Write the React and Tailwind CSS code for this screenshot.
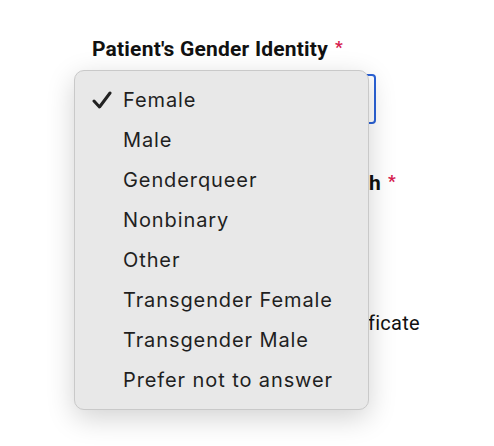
export default function App() {
  const items = [
    "Female",
    "Male",
    "Genderqueer",
    "Nonbinary",
    "Other",
    "Transgender Female",
    "Transgender Male",
    "Prefer not to answer",
  ];
  return (
    <div className="relative w-[494px] h-[446px] bg-white overflow-hidden">
      <div className="pl-[92px] pt-[36px]">
        <div className="flex items-start font-['Roboto',sans-serif] font-bold text-[21px] leading-[26px] text-[#111] tracking-[0.2px]">
          <span>Patient's Gender Identity</span>
          <span className="text-[#d6204e] text-[17px] ml-[7px] leading-[20px] mt-[1px]">*</span>
        </div>
        <div className="mt-[12px] w-[286px] h-[50px] rounded-[4px] border-2 border-[#2b62d6] ml-[-2px]"></div>
        <div className="mt-[46px] w-[304px] flex justify-end items-start font-['Roboto',sans-serif] font-bold text-[21px] leading-[26px] text-[#111] tracking-[0.2px]">
          <span>Patient's Date of Birth</span>
          <span className="text-[#d6204e] text-[17px] ml-[7px] leading-[20px] mt-[1px]">*</span>
        </div>
        <div className="mt-[114px] w-[328px] flex justify-end font-['Roboto',sans-serif] text-[20px] leading-[26px] text-[#111] tracking-[0.3px]">
          Sex on Original Birth Certificate
        </div>
      </div>
      <div className="absolute left-[74px] top-[70px] w-[295px] h-[340px] rounded-[10px] bg-[#e8e8e8] border border-[#c9c9c9] shadow-[0_8px_28px_rgba(0,0,0,0.18)] pt-[9px] pb-[9px]">
        {items.map((t, i) => (
          <div key={t} className="relative h-[40px] flex items-center pl-[48px] font-['Inter',sans-serif] text-[20px] tracking-[0.9px] text-[#1f1f1f]">
            {i === 0 && (
              <svg className="absolute left-[17px] top-[11px]" width="20" height="18" viewBox="0 0 20 18">
                <path d="M2 10 L7.5 16 L18 2" fill="none" stroke="#222" strokeWidth="3" strokeLinecap="round" strokeLinejoin="round" />
              </svg>
            )}
            {t}
          </div>
        ))}
      </div>
    </div>
  );
}
